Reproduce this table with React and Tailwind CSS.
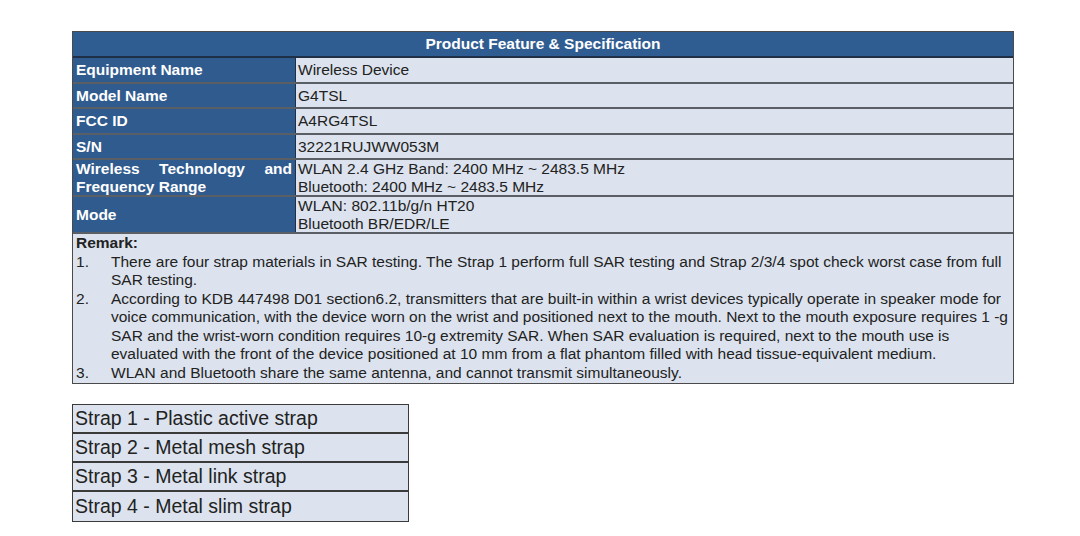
import React from 'react';

const rows = [
  { label: 'Equipment Name', value: ['Wireless Device'], h: 'h-[26px]' },
  { label: 'Model Name', value: ['G4TSL'], h: 'h-[25px]' },
  { label: 'FCC ID', value: ['A4RG4TSL'], h: 'h-[26px]' },
  { label: 'S/N', value: ['32221RUJWW053M'], h: 'h-[25px]' },
  {
    label: 'Wireless Technology and Frequency Range',
    value: ['WLAN 2.4 GHz Band: 2400 MHz ~ 2483.5 MHz', 'Bluetooth: 2400 MHz ~ 2483.5 MHz'],
    h: 'h-[37px]',
    justify: true,
  },
  { label: 'Mode', value: ['WLAN: 802.11b/g/n HT20', 'Bluetooth BR/EDR/LE'], h: 'h-[37px]' },
];

const remarks = [
  <>There are four strap materials in SAR testing. The Strap 1 perform full SAR testing and Strap 2/3/4 spot check worst case from full SAR testing.</>,
  <>
    According to KDB 447498 D01 section6.2, transmitters that are built-in within a wrist devices typically operate in speaker mode for voice communication, with the device worn on the wrist and positioned next to the mouth. Next to the mouth exposure requires{' '}
    <span className="whitespace-nowrap">1 -g</span> SAR and the wrist-worn condition requires 10-g extremity SAR. When SAR evaluation is required, next to the mouth use is evaluated with the front of the device positioned at 10 mm from a flat phantom filled with head tissue-equivalent medium.
  </>,
  <>WLAN and Bluetooth share the same antenna, and cannot transmit simultaneously.</>,
];

const straps = [
  'Strap 1 - Plastic active strap',
  'Strap 2 - Metal mesh strap',
  'Strap 3 - Metal link strap',
  'Strap 4 - Metal slim strap',
];

export default function App() {
  return (
    <div className="w-[1080px] h-[536px] bg-white overflow-hidden font-['Liberation_Sans',Arial,sans-serif] text-[#222]">
      <div className="pt-[31px] pl-[72px]">
        {/* Spec table */}
        <div className="w-[942px] border border-[#4a4a4a]">
          <div className="h-[26px] bg-[#305d91] border-b-2 border-[#1f2f45] flex items-center justify-center text-white font-bold text-[15.5px]">
            Product Feature &amp; Specification
          </div>
          {rows.map((r, i) => (
            <div key={i} className={`flex ${r.h} border-b-2 border-[#5a5f66]`}>
              <div className="w-[223px] shrink-0 bg-[#2f5b8e] border-r border-[#1f2f45] text-white font-bold text-[15.5px] leading-[18px] px-[3px] flex items-center">
                {r.justify ? (
                  <div className="w-full">
                    <div className="flex justify-between">
                      <span>Wireless</span>
                      <span>Technology</span>
                      <span>and</span>
                    </div>
                    <div>Frequency Range</div>
                  </div>
                ) : (
                  <span>{r.label}</span>
                )}
              </div>
              <div className="flex-1 bg-[#dce3ee] px-[2px] text-[15.5px] leading-[18px] flex flex-col justify-center">
                {r.value.map((v, j) => (
                  <div key={j}>{v}</div>
                ))}
              </div>
            </div>
          ))}
          <div className="bg-[#dce3ee] px-[3px] pt-[0px] pb-[1px] text-[15.5px] leading-[18.5px]">
            <div className="font-bold">Remark:</div>
            <div>
              {remarks.map((t, i) => (
                <div key={i} className="flex">
                  <span className="w-[35px] shrink-0">{i + 1}.</span>
                  <span className="flex-1">{t}</span>
                </div>
              ))}
            </div>
          </div>
        </div>

        {/* Strap table */}
        <div className="mt-[20px] w-[337px] border border-[#3a3a3a]">
          {straps.map((s, i) => (
            <div
              key={i}
              className={`h-[29px] bg-[#dce3ee] px-[2px] flex items-center text-[19.5px] ${i < straps.length - 1 ? 'border-b-2 border-[#3a3a3a]' : ''}`}
            >
              {s}
            </div>
          ))}
        </div>
      </div>
    </div>
  );
}
